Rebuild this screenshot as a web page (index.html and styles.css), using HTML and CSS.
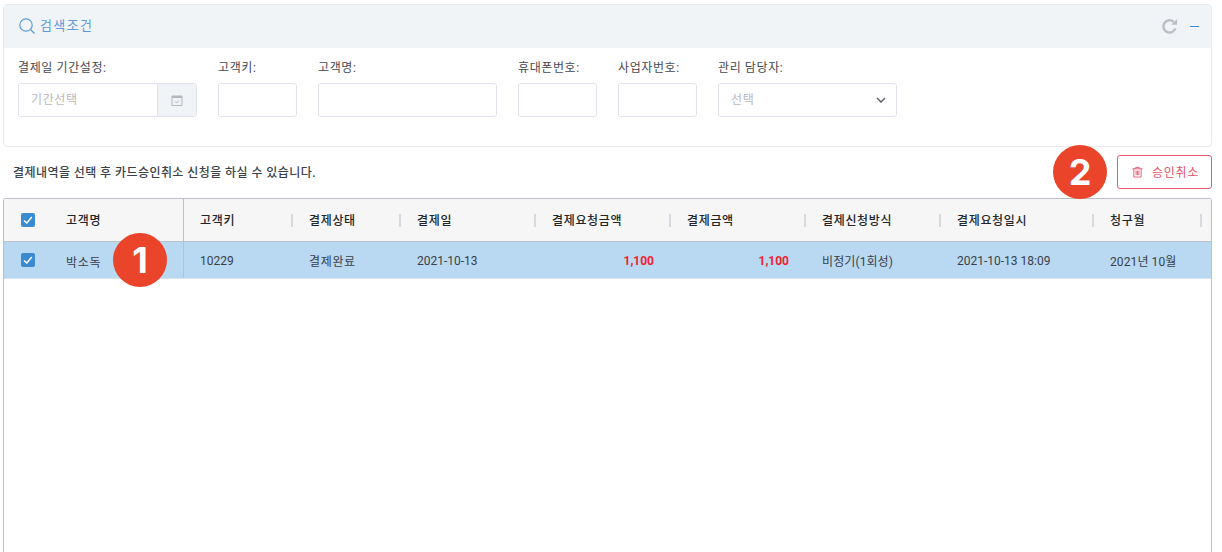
FILE: index.html
```html
<!DOCTYPE html>
<html lang="ko">
<head>
<meta charset="utf-8">
<title>승인취소</title>
<link rel="stylesheet" href="styles.css">
</head>
<body>
<main class="page">
  <section class="panel">
    <header class="panel-head">
      <div class="panel-title">
        <svg class="search-icon" viewBox="0 0 16 16" width="16" height="16"><circle cx="7" cy="7" r="6.2"/><path d="M11.5 11.5L15.5 15.500"/></svg>
        <span class="title-text">검색조건</span>
      </div>
      <div class="panel-tools">
        <svg class="reload-icon" viewBox="0 0 18 18" width="17" height="17"><path class="arc" d="M15.200 11A6.500 6.500 0 1 1 13.500 4.200"/><path class="head" d="M10.800 7.200L17 7.200L17 1Z"/></svg>
        <span class="minus"></span>
      </div>
    </header>
    <form class="filters">
      <div class="field w-lg">
        <label class="label">결제일 기간설정:</label>
        <div class="input-group">
          <span class="placeholder">기간선택</span>
          <span class="addon">
            <svg viewBox="0 0 12 12" width="12" height="12"><path class="cal" d="M1 2h10v9.500H1z"/><path class="cal-top" d="M1 2h10v2H1z"/><path class="cal" d="M4 7.500l1.500 1.500 2.500-2.500"/></svg>
          </span>
        </div>
      </div>
      <div class="field w-sm"><label class="label">고객키:</label><div class="input"></div></div>
      <div class="field w-lg"><label class="label">고객명:</label><div class="input"></div></div>
      <div class="field w-sm"><label class="label">휴대폰번호:</label><div class="input"></div></div>
      <div class="field w-sm"><label class="label">사업자번호:</label><div class="input"></div></div>
      <div class="field w-lg">
        <label class="label">관리 담당자:</label>
        <div class="input select">
          <span class="placeholder">선택</span>
          <svg class="chev" viewBox="0 0 10 6" width="10" height="6"><path d="M1 1l4 4 4-4"/></svg>
        </div>
      </div>
    </form>
  </section>

  <div class="toolbar">
    <p class="notice">결제내역을 선택 후 카드승인취소 신청을 하실 수 있습니다.</p>
    <button class="cancel-btn" type="button">
      <svg viewBox="0 0 12 12" width="11" height="12"><path d="M.5 2.500h11M4 2.500V1h4v1.500M2 2.500V11.500h8V2.500M4.500 4.500v5M6 4.500v5M7.500 4.500v5"/></svg>
      <span>승인취소</span>
    </button>
    <span class="badge badge-two">2</span>
  </div>

  <div class="grid">
    <div class="row head-row">
      <div class="frozen">
        <span class="check"><svg viewBox="0 0 14 14"><path d="M3 7.500l2.800 2.500 5-6"/></svg></span>
        <span class="name-col">고객명</span>
      </div>
      <div class="cell c1 sep">고객키</div>
      <div class="cell c2 sep">결제상태</div>
      <div class="cell c3 sep">결제일</div>
      <div class="cell c4 sep">결제요청금액</div>
      <div class="cell c5 sep">결제금액</div>
      <div class="cell c6 sep">결제신청방식</div>
      <div class="cell c7 sep">결제요청일시</div>
      <div class="cell c8 sep">청구월</div>
    </div>
    <div class="row data-row">
      <div class="frozen">
        <span class="check"><svg viewBox="0 0 14 14"><path d="M3 7.500l2.800 2.500 5-6"/></svg></span>
        <span class="name-col">박소독</span>
        <span class="badge badge-one">1</span>
      </div>
      <div class="cell c1 num">10229</div>
      <div class="cell c2 ko">결제완료</div>
      <div class="cell c3 num">2021-10-13</div>
      <div class="cell c4 amount num">1,100</div>
      <div class="cell c5 amount num">1,100</div>
      <div class="cell c6 ko-mix">비정기(1회성)</div>
      <div class="cell c7 num">2021-10-13 18:09</div>
      <div class="cell c8 ko-mix">2021년 10월</div>
    </div>
  </div>
</main>
</body>
</html>
```

FILE: styles.css
```css
* { box-sizing: border-box; }
html, body { margin: 0; height: 100%; overflow: hidden; background: #fff; }
body {
  font-family: Roboto, "Noto Sans CJK KR", sans-serif;
  font-size: 12px;
  color: #343a40;
}
.page { padding: 4px 10px 0 3px; height: 552px; display: flex; flex-direction: column; }

.panel {
  height: 143px;
  border: 1px solid #e9e9f1;
  border-radius: 4px;
  flex: none;
}
.panel-head {
  height: 43px;
  background: #f1f4f7;
  display: flex;
  align-items: center;
  justify-content: space-between;
  padding: 0 12px 0 15px;
}
.panel-title {
  align-self: flex-start;
  margin-top: 13px;
  display: flex;
  gap: 5px;
  color: #5c9bd9;
  font-size: 13px;
}
.title-text { letter-spacing: 1.4px; line-height: 16px; }
.search-icon { fill: none; stroke: #5c9bd9; stroke-width: 1.200; }
.panel-tools { display: flex; align-items: center; gap: 12px; }
.reload-icon .arc { fill: none; stroke: #bdbdc7; stroke-width: 2.600; }
.reload-icon .head { fill: #bdbdc7; }
.minus { width: 9px; height: 1px; background: #3f8fdc; }

.filters { display: flex; gap: 21px; padding: 10px 14px 0; }
.field { display: flex; flex-direction: column; flex: none; }
.w-lg { width: 179px; }
.w-sm { width: 79px; }
.label { height: 25px; padding-top: 1px; line-height: 18px; color: #444a52; white-space: nowrap; letter-spacing: .6px; }
.input, .input-group {
  height: 34px;
  border: 1px solid #e2e2ec;
  border-radius: 3px;
  background: #fff;
}
.input-group { display: flex; align-items: center; justify-content: space-between; padding-left: 12px; }
.placeholder { color: #b9b9c3; letter-spacing: .6px; line-height: 16px; }
.addon {
  width: 39px;
  height: 100%;
  background: #f1f4f7;
  border-left: 1px solid #e2e2ec;
  display: flex;
  align-items: center;
  justify-content: center;
}
.cal { fill: none; stroke: #b3b7be; stroke-width: 1; }
.cal-top { fill: #b3b7be; }
.select { display: flex; align-items: center; justify-content: space-between; padding: 0 10px 0 12px; }
.chev { fill: none; stroke: #5f6670; stroke-width: 1.500; }

.toolbar {
  position: relative;
  height: 51px;
  flex: none;
  display: flex;
  align-items: center;
  justify-content: space-between;
}
.notice { margin: 0 0 2px 10px; font-weight: 500; color: #3b4148; font-size: 12px; letter-spacing: .43px; }
.cancel-btn {
  width: 95px;
  height: 34px;
  margin-top: -2px;
  display: flex;
  align-items: center;
  justify-content: center;
  gap: 9px;
  background: #fff;
  border: 1px solid #e8566c;
  border-radius: 3px;
  color: #e8566c;
  font: inherit;
  letter-spacing: .7px;
  padding: 0 0 0 2px;
}
.cancel-btn svg { fill: none; stroke: #e8566c; stroke-width: 1; }

.grid {
  flex: 1;
  border: 1px solid #bcbfc9;
  border-bottom: 0;
  border-radius: 3px 3px 0 0;
}
.row { display: flex; }
.head-row {
  height: 43px;
  background: #f6f6f6;
  border-bottom: 1px solid #bdc1c7;
  font-weight: 500;
  color: #212529;
  letter-spacing: .65px;
}
.head-row .cell { padding-bottom: 2px; }
.head-row .name-col { padding-bottom: 2px; }
.data-row { height: 37px; background: #b9d9f3; border-bottom: 1px solid #d6e3ee; color: #3a4047; }
.data-row .num, .data-row .name-col { padding-top: 2px; }
.data-row .name-col, .ko { letter-spacing: .65px; }
.ko-mix { letter-spacing: .1px; }
.frozen {
  position: relative;
  width: 180px;
  flex: none;
  display: flex;
  align-items: center;
  padding-left: 17px;
  border-right: 1px solid #bcc0c8;
}
.check {
  width: 14px;
  height: 14px;
  border-radius: 2px;
  background: #3a8bd0;
  display: block;
  flex: none;
}
.check svg { display: block; width: 14px; height: 14px; fill: none; stroke: #fff; stroke-width: 1.500; }
.name-col { margin-left: 31px; }
.cell { position: relative; padding-left: 16px; display: flex; align-items: center; flex: none; white-space: nowrap; }
.sep::after {
  content: "";
  position: absolute;
  right: 0;
  top: 15px;
  width: 2px;
  height: 13px;
  background: #d6dade;
}
.c1 { width: 109px; }
.c2 { width: 108px; }
.c3, .c4, .c5, .c6 { width: 135px; }
.c7 { width: 153px; }
.c8 { width: 108px; }
.amount { justify-content: flex-end; padding-right: 17px; color: #f1222e; font-weight: 700; }

.badge {
  position: absolute;
  width: 54px;
  height: 54px;
  border-radius: 50%;
  background: #ea442a;
  color: #fff;
  font: 700 36px/54px Inter, Roboto, sans-serif;
  text-align: center;
}
.badge-one { left: 109px; top: -9px; }
.badge-two { left: 1050px; top: -2px; }
```
